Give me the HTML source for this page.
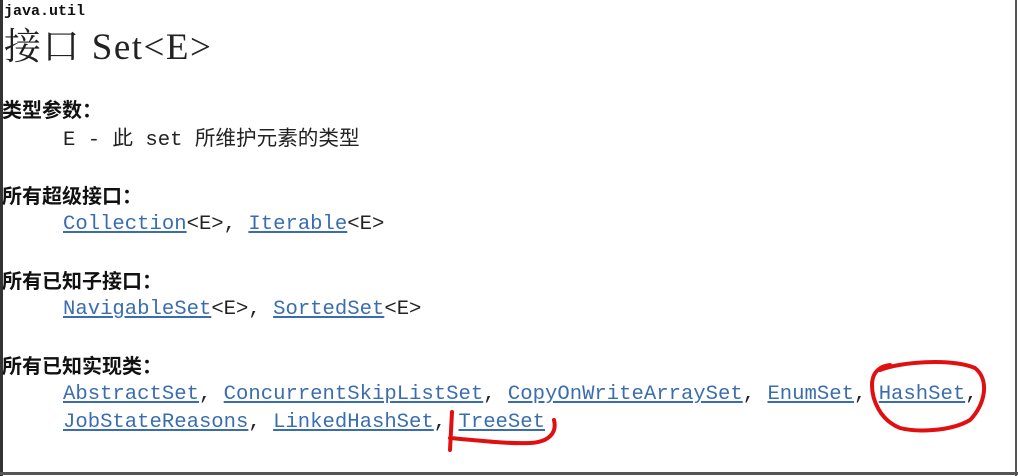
<!DOCTYPE html>
<html><head><meta charset="utf-8"><style>
body{margin:0;width:1018px;height:476px;background:#fff;position:relative;overflow:hidden}
.t{position:absolute;white-space:pre;line-height:1}
.m{font-family:"Liberation Mono","Noto Sans CJK SC",monospace;font-size:20.6px;color:#222}
.h{font-family:"Liberation Sans","Noto Sans CJK SC",sans-serif;font-size:20px;font-weight:bold;color:#111}
a{color:#3a6db0;text-decoration:underline}
</style></head><body>
<div style="position:absolute;left:0;top:0;width:3px;height:476px;background:#333"></div>
<div style="position:absolute;right:1px;top:0;width:2px;height:476px;background:#555"></div>
<div style="position:absolute;left:0;top:472px;width:1018px;height:3px;background:#555"></div>
<div class="t" style="left:4px;top:4px;font-family:'Liberation Mono',monospace;font-weight:bold;font-size:15px;color:#111">java.util</div>
<div class="t" style="left:4px;top:29px;font-family:'Liberation Serif','Noto Serif CJK SC',serif;font-size:37px;letter-spacing:1.5px;color:#222">接口 Set&lt;E&gt;</div>
<div class="t h" style="left:2px;top:101px">类型参数：</div>
<div class="t m" style="left:63px;top:131px">E - 此 set 所维护元素的类型</div>
<div class="t h" style="left:2px;top:187px">所有超级接口：</div>
<div class="t m" style="left:63px;top:215px"><a>Collection</a>&lt;E&gt;, <a>Iterable</a>&lt;E&gt;</div>
<div class="t h" style="left:2px;top:272px">所有已知子接口：</div>
<div class="t m" style="left:63px;top:300px"><a>NavigableSet</a>&lt;E&gt;, <a>SortedSet</a>&lt;E&gt;</div>
<div class="t h" style="left:2px;top:357px">所有已知实现类：</div>
<div class="t m" style="left:63px;top:385px"><a>AbstractSet</a>, <a>ConcurrentSkipListSet</a>, <a>CopyOnWriteArraySet</a>, <a>EnumSet</a>, <a>HashSet</a>,</div>
<div class="t m" style="left:63px;top:413px"><a>JobStateReasons</a>, <a>LinkedHashSet</a>, <a>TreeSet</a></div>
<svg style="position:absolute;left:0;top:0" width="1018" height="476">
<path d="M880 370 C 900 362, 950 358, 975 368 C 990 380, 985 405, 970 420 C 950 432, 915 432, 900 428 C 880 420, 872 400, 872 385 C 872 372, 880 366, 890 365" fill="none" stroke="#e01010" stroke-width="4" stroke-linecap="round"/>
<path d="M554 420 C 557 432, 550 442, 530 443 C 505 444, 475 440, 450 438 M 452 412 L 450 450" fill="none" stroke="#e01010" stroke-width="4" stroke-linecap="round"/>
</svg>
</body></html>
